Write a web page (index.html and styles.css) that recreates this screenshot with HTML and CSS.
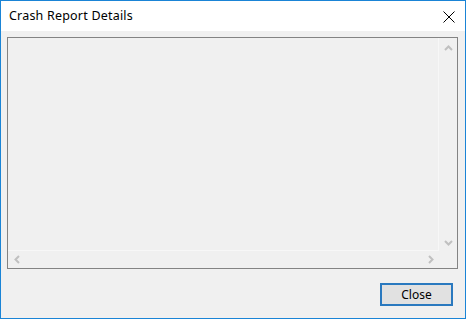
FILE: index.html
```html
<!DOCTYPE html>
<html>
<head>
<meta charset="utf-8">
<link rel="stylesheet" href="styles.css">
</head>
<body>
<div class="window">
  <div class="titlebar">
    <span class="title">Crash Report Details</span>
    <svg class="close-x" width="12" height="12" viewBox="0 0 12 12"><path d="M0.5 0.5 L11.5 11.5 M11.5 0.5 L0.5 11.5" stroke="#000" stroke-width="1" fill="none"/></svg>
  </div>
  <div class="content">
    <div class="textbox">
      <div class="text-area"></div>
      <div class="vscroll">
        <svg width="9" height="6" viewBox="0 0 9 6"><path d="M1 5 L4.5 1.5 L8 5" stroke="#c0c0c0" stroke-width="2" fill="none"/></svg>
        <svg width="9" height="6" viewBox="0 0 9 6"><path d="M1 1 L4.5 4.5 L8 1" stroke="#c0c0c0" stroke-width="2" fill="none"/></svg>
      </div>
      <div class="hscroll">
        <svg width="6" height="9" viewBox="0 0 6 9"><path d="M5 1 L1.5 4.5 L5 8" stroke="#c0c0c0" stroke-width="2" fill="none"/></svg>
        <svg width="6" height="9" viewBox="0 0 6 9"><path d="M1 1 L4.5 4.5 L1 8" stroke="#c0c0c0" stroke-width="2" fill="none"/></svg>
      </div>
      <div class="corner"></div>
    </div>
    <div class="footer">
      <button class="btn">Close</button>
    </div>
  </div>
</div>
</body>
</html>
```
FILE: styles.css
```css
html, body {
  margin: 0;
  padding: 0;
  background: #f0f0f0;
}
.window {
  box-sizing: border-box;
  width: 466px;
  height: 319px;
  border: 1px solid #1a84d6;
  display: flex;
  flex-direction: column;
  font-family: "Noto Sans", "Open Sans", sans-serif;
  font-size: 12px;
  color: #000;
}
.titlebar {
  height: 30px;
  flex: 0 0 30px;
  background: #fff;
  display: flex;
  align-items: center;
  justify-content: space-between;
  padding: 0 10px 0 8px;
}
.title {
  font-size: 12.5px;
  letter-spacing: 0.2px;
  margin-top: -1px;
}
.close-x {
  display: block;
  margin-top: 1px;
}
.content {
  flex: 1;
  background: #f0f0f0;
  display: flex;
  flex-direction: column;
  padding: 6px 7px 0 6px;
}
.textbox {
  box-sizing: border-box;
  height: 232px;
  border: 1px solid #838383;
  display: grid;
  grid-template-columns: 1fr 18px;
  grid-template-rows: 1fr 17px;
  background: #f0f0f0;
}
.text-area {
  border-right: 1px solid #f7f7f7;
  border-bottom: 1px solid #f7f7f7;
}
.vscroll {
  display: flex;
  flex-direction: column;
  justify-content: space-between;
  align-items: center;
  padding: 7px 0 5px;
}
.vscroll svg, .hscroll svg {
  display: block;
}
.hscroll {
  display: flex;
  justify-content: space-between;
  align-items: center;
  padding: 0 5px 0 6px;
}
.footer {
  flex: 1;
  display: flex;
  justify-content: flex-end;
  align-items: flex-start;
  padding-top: 14px;
  padding-right: 5px;
}
.btn {
  box-sizing: border-box;
  width: 73px;
  height: 23px;
  background: #e1e1e1;
  border: 2px solid #2a79bf;
  font-family: "Noto Sans", "Open Sans", sans-serif;
  font-size: 12px;
  color: #000;
  padding: 0 0 1px;
  margin: 0;
}
```
